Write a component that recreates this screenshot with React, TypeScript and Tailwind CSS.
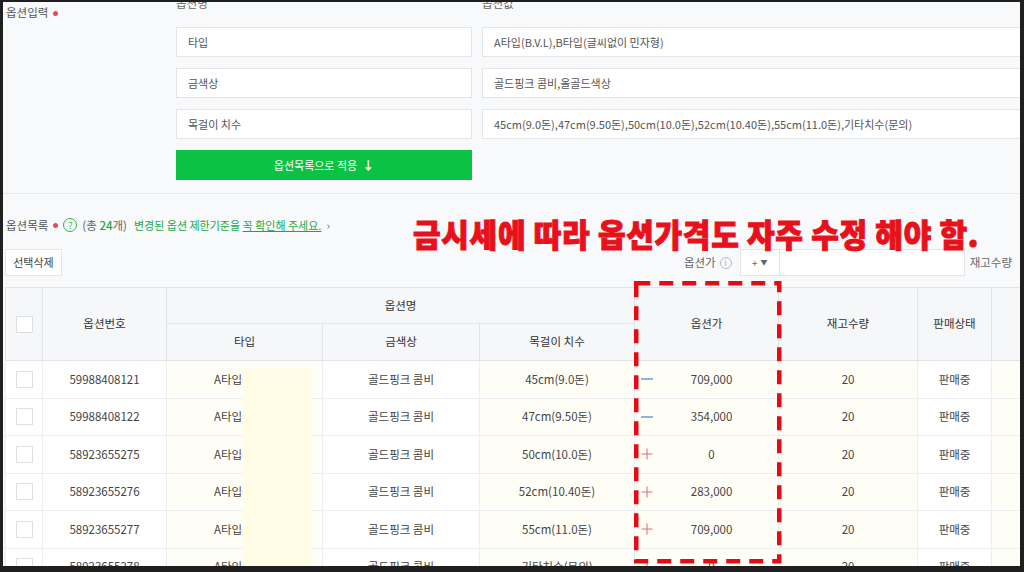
import React from "react";

type Row = {
  no: string;
  type: string;
  color: string;
  size: string;
  sign: "-" | "+";
  price: string;
};

const rows: Row[] = [
  { no: "59988408121", type: "A타입(B.V.L)", color: "골드핑크 콤비", size: "45cm(9.0돈)", sign: "-", price: "709,000" },
  { no: "59988408122", type: "A타입(B.V.L)", color: "골드핑크 콤비", size: "47cm(9.50돈)", sign: "-", price: "354,000" },
  { no: "58923655275", type: "A타입(B.V.L)", color: "골드핑크 콤비", size: "50cm(10.0돈)", sign: "+", price: "0" },
  { no: "58923655276", type: "A타입(B.V.L)", color: "골드핑크 콤비", size: "52cm(10.40돈)", sign: "+", price: "283,000" },
  { no: "58923655277", type: "A타입(B.V.L)", color: "골드핑크 콤비", size: "55cm(11.0돈)", sign: "+", price: "709,000" },
  { no: "58923655278", type: "A타입(B.V.L)", color: "골드핑크 콤비", size: "기타치수(문의)", sign: "+", price: "0" },
];

const optionInputs = [
  { name: "타입", value: "A타입(B.V.L),B타입(글씨없이 민자형)" },
  { name: "금색상", value: "골드핑크 콤비,올골드색상" },
  { name: "목걸이 치수", value: "45cm(9.0돈),47cm(9.50돈),50cm(10.0돈),52cm(10.40돈),55cm(11.0돈),기타치수(문의)" },
];

function Checkbox() {
  return <div className="mx-auto h-[17px] w-[17px] border border-[#dcdfe4] bg-white" />;
}

function RedDot() {
  return <span className="ml-[5px] inline-block h-[5px] w-[5px] rounded-full bg-[#e8475f] align-middle" />;
}

function SignIcon({ sign }: { sign: "-" | "+" }) {
  if (sign === "-") {
    return (
      <svg width="12" height="12" viewBox="0 0 12 12" className="ml-[6px] shrink-0">
        <path d="M0 6h12" stroke="#4a8fd1" strokeWidth="1.3" />
      </svg>
    );
  }
  return (
    <svg width="12" height="12" viewBox="0 0 12 12" className="ml-[6px] shrink-0">
      <path d="M0.5 6h11M6 0.5v11" stroke="#e0707a" strokeWidth="1.1" />
    </svg>
  );
}

export default function App() {
  return (
    <div
      className="h-[572px] w-[1024px] bg-[#1f1f1f] pb-[6px] pl-[3px] pr-[4px] pt-[2px]"
      style={{ fontFamily: '"Noto Sans CJK KR", "Noto Sans", sans-serif' }}
    >
      <div className="relative h-full w-full overflow-hidden bg-[#f8f9fb] text-[11.5px] text-[#444]">
        {/* 옵션입력 */}
        <div className="flex h-[192px] border-b border-[#e4e6ea]">
          <div className="w-[173px] shrink-0 pl-[3px] pt-[2px] text-[#555]">
            <span className="leading-[16px]">옵션입력</span>
            <RedDot />
          </div>
          <div className="flex shrink-0 gap-[10px]">
            <div className="flex w-[296px] shrink-0 flex-col">
              <div className="-mt-[7px] h-[16px] leading-[16px] text-[#666]">옵션명</div>
              <div className="mt-[16px] flex flex-col gap-[11px]">
                {optionInputs.map((o) => (
                  <div key={o.name} className="flex h-[30px] items-center border border-[#e3e5e9] bg-white pl-[11px] text-[11px] text-[#555]">
                    {o.name}
                  </div>
                ))}
                <button className="flex h-[30px] items-center justify-center gap-[5px] bg-[#0bc244] text-[11px] text-white">
                  옵션목록으로 적용
                  <span className="text-[12px] font-bold leading-none">↓</span>
                </button>
              </div>
            </div>
            <div className="flex w-[560px] shrink-0 flex-col">
              <div className="-mt-[7px] h-[16px] leading-[16px] text-[#666]">옵션값</div>
              <div className="mt-[16px] flex flex-col gap-[11px]">
                {optionInputs.map((o) => (
                  <div key={o.name} className="flex h-[30px] items-center border border-[#e3e5e9] bg-white pl-[11px] text-[11px] text-[#555]">
                    {o.value}
                  </div>
                ))}
              </div>
            </div>
          </div>
        </div>

        {/* 옵션목록 */}
        <div className="mt-[23px] flex h-[16px] items-center pl-[3px] leading-[16px]">
          <span className="text-[#555]">옵션목록</span>
          <RedDot />
          <span className="ml-[5px] flex h-[14px] w-[14px] items-center justify-center rounded-full border border-[#2bb24c] text-[9px] leading-none text-[#2bb24c]">?</span>
          <span className="ml-[5px] text-[#666]">
            (총 <span className="font-medium text-[#1aa845]">24</span>개)
          </span>
          <span className="ml-[7px] text-[11px] text-[#1aa845]">
            변경된 옵션 제한기준을 <span className="underline">꼭 확인해 주세요.</span>
          </span>
          <span className="ml-[5px] text-[#777]">›</span>
        </div>

        <div className="mt-[16px] flex h-[27px] items-center pr-[8px]">
          <button className="ml-[2px] h-[27px] w-[57px] border border-[#e3e5e9] bg-white text-[11px] text-[#444]">선택삭제</button>
          <div className="ml-auto flex items-center">
            <span className="text-[#666]">옵션가</span>
            <span className="ml-[4px] flex h-[12px] w-[12px] items-center justify-center rounded-full border border-[#bbb] text-[8px] leading-none text-[#aaa]">i</span>
            <div className="ml-[8px] flex h-[27px] w-[40px] items-center justify-center gap-[3px] border border-[#e3e5e9] bg-white text-[10px] text-[#666]">
              <span>+</span>
              <span className="text-[7px]">▼</span>
            </div>
            <div className="h-[27px] w-[185px] border border-l-0 border-[#e3e5e9] bg-white" />
            <span className="ml-[5px] text-[#666]">재고수량</span>
          </div>
        </div>

        {/* 목록 테이블 */}
        <div className="ml-[2px] mt-[11px]">
          <table className="w-[1030px] table-fixed border-collapse text-center">
            <colgroup>
              <col className="w-[37px]" />
              <col className="w-[124px]" />
              <col className="w-[156px]" />
              <col className="w-[157px]" />
              <col className="w-[155px]" />
              <col className="w-[144px]" />
              <col className="w-[139px]" />
              <col className="w-[74px]" />
              <col className="w-[44px]" />
            </colgroup>
            <thead className="bg-[#f6f7f9] text-[#333]">
              <tr className="h-[36px]">
                <th rowSpan={2} className="border border-[#e1e3e8] font-normal">
                  <Checkbox />
                </th>
                <th rowSpan={2} className="border border-[#e1e3e8] font-normal">옵션번호</th>
                <th colSpan={3} className="border border-[#e1e3e8] font-normal">옵션명</th>
                <th rowSpan={2} className="border border-[#e1e3e8] font-normal">옵션가</th>
                <th rowSpan={2} className="border border-[#e1e3e8] font-normal">재고수량</th>
                <th rowSpan={2} className="border border-[#e1e3e8] font-normal">판매상태</th>
                <th rowSpan={2} className="border border-[#e1e3e8] font-normal" />
              </tr>
              <tr className="h-[37px]">
                <th className="border border-[#e1e3e8] font-normal">타입</th>
                <th className="border border-[#e1e3e8] font-normal">금색상</th>
                <th className="border border-[#e1e3e8] font-normal">목걸이 치수</th>
              </tr>
            </thead>
            <tbody>
              {rows.map((r) => (
                <tr key={r.no} className="h-[37.5px] border-b border-[#eceef2]">
                  <td className="border-x border-[#eceef2] bg-white">
                    <Checkbox />
                  </td>
                  <td className="border-x border-[#eceef2] bg-white">{r.no}</td>
                  <td className="border-x border-[#eceef2] bg-[#fffef6]">{r.type}</td>
                  <td className="border-x border-[#eceef2] bg-white">{r.color}</td>
                  <td className="border-x border-[#eceef2] bg-[#fffef6]">{r.size}</td>
                  <td className="border-x border-[#eceef2] bg-[#fffef6]">
                    <div className="flex items-center">
                      <SignIcon sign={r.sign} />
                      <span className="flex-1 pr-[8px]">{r.price}</span>
                    </div>
                  </td>
                  <td className="border-x border-[#eceef2] bg-[#fffef6]">20</td>
                  <td className="border-x border-[#eceef2] bg-white">판매중</td>
                  <td className="border-x border-[#eceef2] bg-[#fffef6]" />
                </tr>
              ))}
            </tbody>
          </table>
        </div>

        {/* 가림 처리 */}
        <div className="absolute left-[240px] top-[365px] h-[210px] w-[69px] bg-[#fffde6]" />

        {/* 안내 문구 */}
        <div className="absolute left-[410px] top-[215px] origin-top-left scale-y-[1.06] whitespace-nowrap text-[30px] font-black leading-none tracking-[0.7px] text-[#e8101a] [-webkit-text-stroke:1px_#e8101a]">
          금시세에 따라 옵션가격도 자주 수정 해야 함.
        </div>

        {/* 점선 강조 */}
        <svg className="absolute left-[631px] top-[279px]" width="148" height="283" viewBox="0 0 148 283">
          <rect
            x="2.25"
            y="2.25"
            width="143"
            height="278"
            fill="none"
            stroke="#e60a14"
            strokeWidth="4.5"
            strokeDasharray="14 9"
          />
        </svg>
      </div>
    </div>
  );
}
